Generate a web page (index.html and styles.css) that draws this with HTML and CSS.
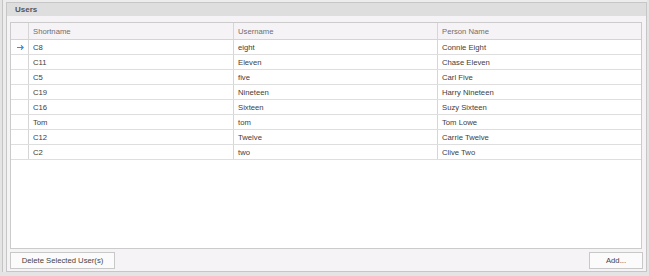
FILE: index.html
```html
<!DOCTYPE html>
<html>
<head>
<meta charset="utf-8">
<link rel="stylesheet" href="styles.css">
</head>
<body>
<div class="frame">
  <div class="group">
    <div class="group-title">Users</div>
    <div class="group-body">
      <div class="grid">
        <div class="row head">
          <div class="ind"></div>
          <div class="cell">Shortname</div>
          <div class="cell">Username</div>
          <div class="cell last">Person Name</div>
        </div>
        <div class="row">
          <div class="ind"><svg class="arrow" width="7" height="5" viewBox="0 0 7 5"><path d="M0 2.5H6.2M4 0.3L6.2 2.5L4 4.7" fill="none" stroke="#3a8ae6" stroke-width="1.1"/></svg></div>
          <div class="cell">C8</div><div class="cell">eight</div><div class="cell last">Connie Eight</div>
        </div>
        <div class="row"><div class="ind"></div><div class="cell">C11</div><div class="cell">Eleven</div><div class="cell last">Chase Eleven</div></div>
        <div class="row"><div class="ind"></div><div class="cell">C5</div><div class="cell">five</div><div class="cell last">Carl Five</div></div>
        <div class="row"><div class="ind"></div><div class="cell">C19</div><div class="cell">Nineteen</div><div class="cell last">Harry Nineteen</div></div>
        <div class="row"><div class="ind"></div><div class="cell">C16</div><div class="cell">Sixteen</div><div class="cell last">Suzy Sixteen</div></div>
        <div class="row"><div class="ind"></div><div class="cell">Tom</div><div class="cell">tom</div><div class="cell last">Tom Lowe</div></div>
        <div class="row"><div class="ind"></div><div class="cell">C12</div><div class="cell">Twelve</div><div class="cell last">Carrie Twelve</div></div>
        <div class="row"><div class="ind"></div><div class="cell">C2</div><div class="cell">two</div><div class="cell last">Clive Two</div></div>
      </div>
      <div class="buttons">
        <button class="btn btn-delete">Delete Selected User(s)</button>
        <button class="btn btn-add">Add...</button>
      </div>
    </div>
  </div>
</div>
</body>
</html>
```
FILE: styles.css
```css
html, body {
  margin: 0;
  padding: 0;
}
body {
  width: 649px;
  height: 276px;
  background: #e4e4e4;
  font-family: "Liberation Sans", Arial, sans-serif;
  font-size: 7.7px;
  color: #404040;
  overflow: hidden;
}
.frame {
  margin-left: 2px;
  border-left: 1px solid #c4c4c4;
  padding-left: 3px;
  padding-top: 2px;
  height: 270px;
  width: 641px;
  background: #ececec;
}
.group {
  box-sizing: border-box;
  width: 641px;
  height: 270px;
  border: 1px solid #c6c6c6;
  background: #f6f3f6;
  display: flex;
  flex-direction: column;
}
.group-title {
  height: 13px;
  line-height: 13px;
  background: #dedede;
  font-weight: bold;
  color: #555;
  padding-left: 8px;
  font-size: 8px;
}
.group-body {
  flex: 1;
  display: flex;
  flex-direction: column;
  padding: 6px 4px 2px 3px;
}
.grid {
  box-sizing: border-box;
  height: 227px;
  border: 1px solid #cbcbcb;
  background: #fff;
}
.row {
  display: flex;
  height: 15px;
  border-bottom: 1px solid #dedede;
  box-sizing: border-box;
}
.row.head {
  height: 17px;
  background: #f6f3f6;
  border-bottom: 1px solid #d4d4d4;
  color: #6e6e6e;
}
.ind {
  width: 17px;
  border-right: 1px solid #d6d6d6;
  display: flex;
  align-items: center;
  justify-content: center;
}
.arrow {
  margin-left: 2px;
}
.cell {
  width: 199px;
  padding-left: 4px;
  border-right: 1px solid #d6d6d6;
  display: flex;
  align-items: center;
}
.cell.last {
  flex: 1;
  border-right: none;
}
.row .cell:nth-child(2) { width: 200px; }
.buttons {
  display: flex;
  justify-content: space-between;
  margin-top: 3px;
}
.btn {
  box-sizing: border-box;
  height: 17px;
  background: #fcfbfc;
  border: 1px solid #c8c8c8;
  font-family: "Liberation Sans", Arial, sans-serif;
  font-size: 7.7px;
  color: #444;
  padding: 0;
  margin: 0;
}
.btn-delete { width: 105px; }
.btn-add { width: 54px; margin-right: -1px; }
```
